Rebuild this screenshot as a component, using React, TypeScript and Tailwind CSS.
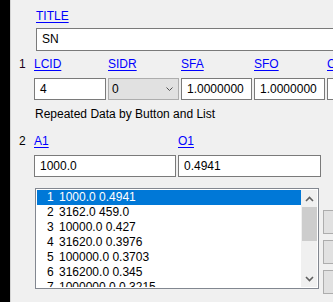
import React from "react";

const font = { fontFamily: '"Liberation Sans", Arial, sans-serif' };

function Label({ text }: { text: string }) {
  return <div className="h-[16px] leading-[16px] text-[12px] text-[#0000ff] underline underline-offset-[2px]">{text}</div>;
}

function Field({ label, value, w }: { label: string; value: string; w: string }) {
  return (
    <div className={`flex flex-col shrink-0 ${w}`}>
      <Label text={label} />
      <div className="mt-[6px] h-[22px] border border-[#7a7a7a] bg-white pl-[5px] text-[12px] leading-[20px] text-black overflow-hidden whitespace-nowrap">
        {value}
      </div>
    </div>
  );
}

function Chevron({ up }: { up?: boolean }) {
  return (
    <svg width="9" height="6" viewBox="0 0 9 6" className="block">
      <path d={up ? "M1 5 L4.5 1.5 L8 5" : "M1 1 L4.5 4.5 L8 1"} fill="none" stroke="#606060" strokeWidth="1.6" />
    </svg>
  );
}

const rows = [
  ["1", "1000.0 0.4941"],
  ["2", "3162.0 459.0"],
  ["3", "10000.0 0.427"],
  ["4", "31620.0 0.3976"],
  ["5", "100000.0 0.3703"],
  ["6", "316200.0 0.345"],
  ["7", "1000000.0 0.3215"],
];

export default function App() {
  return (
    <div className="w-[333px] h-[302px] overflow-hidden flex bg-[#f0f0f0]" style={font}>
      <div className="w-[10px] shrink-0 bg-black" />
      <div className="w-px shrink-0 bg-[#d4d4d4]" />
      <div className="flex-1 min-w-0 flex flex-col">
        <div className="ml-[7px] h-[2px] bg-[#f8f8f8]" />
        <div className="pl-[25px] pt-[8px]">
          <Label text="TITLE" />
          <div className="mt-[4px] w-[400px] h-[23px] border border-[#7a7a7a] bg-white pl-[5px] text-[12px] leading-[21px] text-black">SN</div>
        </div>

        <div className="flex mt-[5px]">
          <div className="w-[23px] shrink-0 pl-[8px] h-[16px] leading-[16px] text-[12px] text-[#200018]">1</div>
          <div className="flex gap-[2px]">
            <Field label="LCID" value="4" w="w-[72px]" />
            <div className="flex flex-col shrink-0 w-[71px]">
              <Label text="SIDR" />
              <div className="mt-[6px] h-[22px] border border-[#adadad] bg-[#e1e1e1] pl-[3px] pr-[5px] flex items-center justify-between text-[12px] text-black">
                <span>0</span>
                <svg width="7" height="4" viewBox="0 0 7 4">
                  <path d="M0.5 0.5 L3.5 3.5 L6.5 0.5" fill="none" stroke="#505050" strokeWidth="1" />
                </svg>
              </div>
            </div>
            <Field label="SFA" value="1.0000000" w="w-[71px]" />
            <Field label="SFO" value="1.0000000" w="w-[71px]" />
            <Field label="C" value="1.0000000" w="w-[71px]" />
          </div>
        </div>

        <div className="ml-[24px] mt-[6px] h-[16px] leading-[16px] text-[12px] text-black whitespace-nowrap">Repeated Data by Button and List</div>
        <div className="ml-[24px] mt-[4px] h-px bg-[#a0a0a0]" />

        <div className="flex mt-[7px]">
          <div className="w-[23px] shrink-0 pl-[8px] h-[16px] leading-[16px] text-[12px] text-black">2</div>
          <div className="flex gap-[2px]">
            <Field label="A1" value="1000.0" w="w-[142px]" />
            <Field label="O1" value="0.4941" w="w-[143px]" />
          </div>
        </div>

        <div className="flex ml-[24px] mt-[11px] items-start">
          <div className="w-[284px] h-[101px] shrink-0 border border-[#828790] bg-white flex p-px">
            <div className="flex-1 overflow-hidden text-[12px] text-black">
              {rows.map(([n, v], i) => (
                <div
                  key={n}
                  className={`h-[15px] leading-[15px] flex whitespace-nowrap ${i === 0 ? "bg-[#0078d7] text-white" : ""}`}
                >
                  <span className="w-[10px] ml-[10px] shrink-0">{n}</span>
                  <span className="ml-[2px]">{v}</span>
                </div>
              ))}
            </div>
            <div className="w-[16px] shrink-0 bg-[#f0f0f0] flex flex-col items-center">
              <div className="h-[17px] flex items-center justify-center">
                <Chevron up />
              </div>
              <div className="w-[15px] h-[34px] bg-[#cdcdcd]" />
              <div className="flex-1" />
              <div className="h-[17px] flex items-center justify-center">
                <Chevron />
              </div>
            </div>
          </div>
          <div className="ml-[4px] mt-[22px] flex flex-col gap-[6px]">
            <div className="w-[60px] h-[24px] border border-[#adadad] bg-[#e1e1e1]" />
            <div className="w-[60px] h-[24px] border border-[#adadad] bg-[#e1e1e1]" />
            <div className="w-[60px] h-[24px] border border-[#adadad] bg-[#e1e1e1]" />
          </div>
        </div>

        <div className="ml-[8px] mt-[15px] h-px bg-[#a0a0a0]" />
      </div>
    </div>
  );
}
